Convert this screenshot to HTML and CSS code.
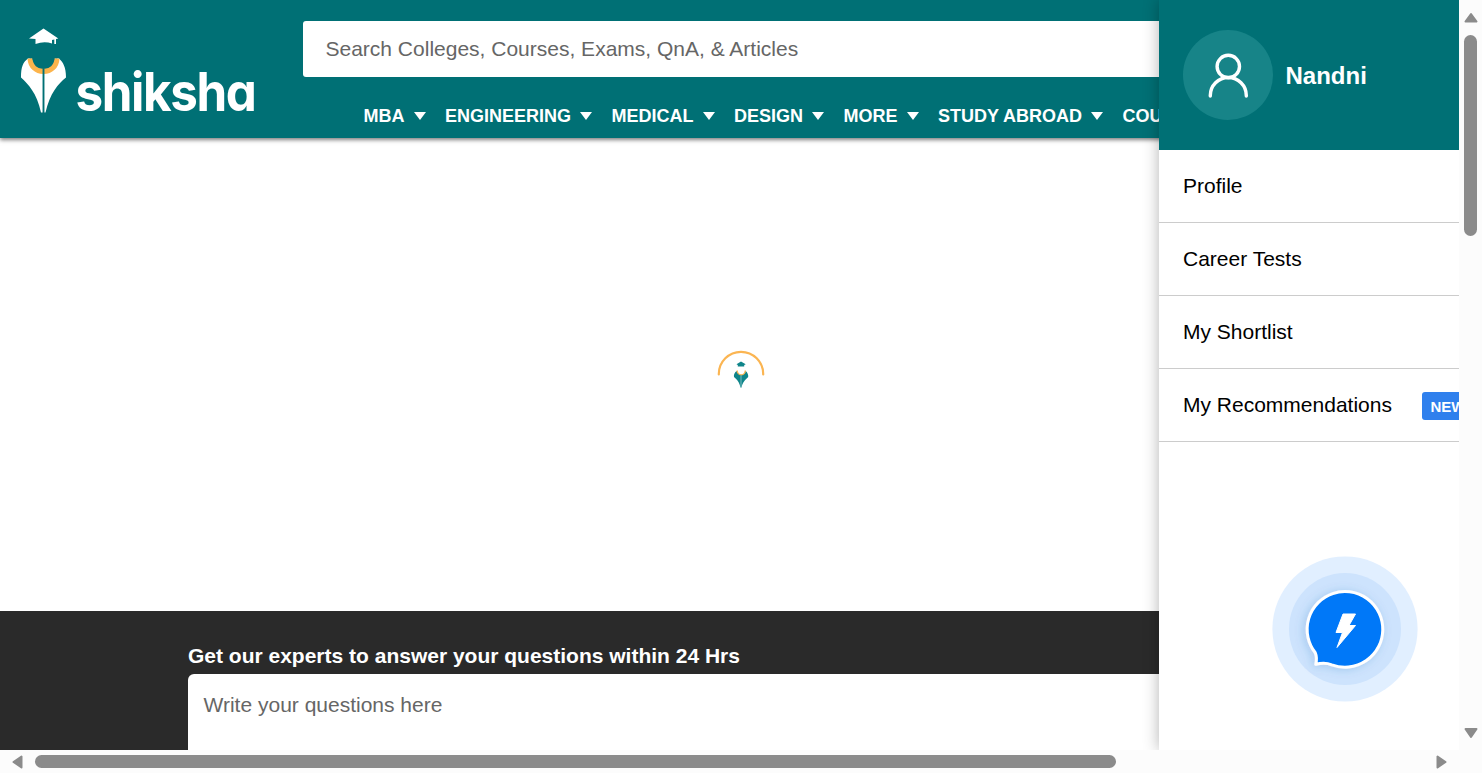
FILE: index.html
```html
<!DOCTYPE html>
<html lang="en">
<head>
<meta charset="utf-8">
<title>Shiksha</title>
<link rel="stylesheet" href="styles.css">
</head>
<body>
<div class="window">
  <div class="viewport">
    <div class="page">
      <header class="header">
        <svg class="logo" viewBox="0 0 280 138">
          <path fill="#fff" d="M29 38.500L43.500 28.500L58.300 38.500L56 39V44H54.300V39.500L52 40V43.500Q44 41 35.500 44V39Z"/>
          <path fill="#fff" d="M28 58.500C23 62 21 67 21 77.500C28 84 37 93 41 112.500H45.500C50 93 58 84 66 77.500C66 67 63 62 59 58.500Z"/>
          <path fill="#007075" stroke="#fcb44c" stroke-width="5" d="M30 58.500C30.500 66.500 36 71.500 43.500 71.500S56.500 66.500 57 58.500"/>
          <path fill="#007075" d="M32.300 57H54.500V59.500H32.300Z"/>
          <path stroke="#007075" stroke-width="1.900" d="M43.500 69V113"/>
          <text class="logo-text" x="75.500" y="110.700" textLength="180" lengthAdjust="spacingAndGlyphs">shiksha</text>
        </svg>
        <div class="header-main">
          <div class="search">Search Colleges, Courses, Exams, QnA, &amp; Articles</div>
          <nav class="nav">
            <a class="nav-item">MBA</a>
            <a class="nav-item">ENGINEERING</a>
            <a class="nav-item">MEDICAL</a>
            <a class="nav-item">DESIGN</a>
            <a class="nav-item">MORE</a>
            <a class="nav-item">STUDY ABROAD</a>
            <a class="nav-item">COUNSELING</a>
          </nav>
        </div>
      </header>
      <main class="main">
        <svg class="loader" width="60" height="60" viewBox="0 0 60 60">
          <path fill="none" stroke="#fbb552" stroke-width="2.200" stroke-linecap="round" d="M7.800 33.500V33A22.200 22.200 0 0 1 52.200 33V33.500"/>
          <path fill="#0f858a" d="M25.500 23.300L30 20.500L34.700 23.300L33.200 24V25.500H26.800V24Z"/>
          <path fill="#0f858a" d="M26 30C23.500 31 22.500 34 23 36C26 38.500 28.500 41 29.400 46.500H30.600C31.500 41 34.500 38.500 37.200 36C37.500 34 36.500 31 34.500 30Z"/>
          <path fill="#fff" stroke="#fbb552" stroke-width="1.400" d="M26.200 29.500A4 4.300 0 0 0 34.300 29.500"/>
          <path stroke="#bfe0e1" stroke-width=".6" d="M30 34.500V46"/>
        </svg>
      </main>
      <section class="ask">
        <h2 class="ask-title">Get our experts to answer your questions within 24 Hrs</h2>
        <div class="ask-box">Write your questions here</div>
      </section>
    </div>
    <aside class="drawer">
      <div class="user">
        <span class="avatar">
          <svg width="46" height="50" viewBox="0 0 46 50" fill="none" stroke="#fff" stroke-width="3.400" stroke-linecap="round"><circle cx="23.300" cy="16.500" r="11.200"/><path d="M5.300 46V45.500A18 18 0 0 1 41.300 45.500V46"/></svg>
        </span>
        <span class="user-name">Nandni</span>
      </div>
      <a class="menu-item">Profile</a>
      <a class="menu-item">Career Tests</a>
      <a class="menu-item">My Shortlist</a>
      <a class="menu-item">My Recommendations<span class="badge">NEW</span></a>
      <svg class="chat" viewBox="0 0 150 150">
        <defs><filter id="glow" x="-30%" y="-30%" width="160%" height="160%"><feDropShadow dx="-2" dy="1" stdDeviation="5" flood-color="#2868b8" flood-opacity=".22"/></filter></defs>
        <circle cx="75" cy="75" r="72.600" fill="#e1efff"/>
        <circle cx="75" cy="75" r="56" fill="#cde3fd"/>
        <path filter="url(#glow)" fill="#0078f8" stroke="#fff" stroke-width="3" stroke-linejoin="round" d="M45 109.500C46 105 46 101.500 44.500 98A37.800 37.800 0 1 1 61 110C56 108 51 108 45 109.500Z" transform="translate(.8 .8)"/>
        <path fill="#fff" stroke="#fff" stroke-linejoin="round" d="M73 60H85.500L79 71.500H85.500L67 93.500L72.500 78.500H66Z"/>
      </svg>
    </aside>
  </div>
  <div class="scroll-y">
    <svg width="14" height="11" viewBox="0 0 14 11"><path class="arrow" d="M7 2L12.500 9.500H1.500Z"/></svg>
    <span class="thumb-y"></span>
    <svg width="14" height="11" viewBox="0 0 14 11"><path class="arrow" d="M7 9L1.500 1H12.500Z"/></svg>
  </div>
  <div class="scroll-x">
    <svg width="11" height="14" viewBox="0 0 11 14"><path class="arrow" d="M1.500 7L9.500 1.500V12.500Z"/></svg>
    <span class="thumb-x"></span>
    <svg width="11" height="14" viewBox="0 0 11 14"><path class="arrow" d="M9.500 7L1.500 1.500V12.500Z"/></svg>
  </div>
</div>
</body>
</html>
```
FILE: styles.css
```css
* { box-sizing: border-box; }
body { margin: 0; font-family: "Liberation Sans", Arial, sans-serif; font-size: 21px; overflow: hidden; }
.window { width: 1482px; height: 773px; display: grid; grid-template: 750px 23px / 1459px 23px; background: #fcfcfc; }
.viewport { position: relative; overflow: hidden; background: #fff; }
.page { height: 750px; display: flex; flex-direction: column; }
.header { height: 138px; flex: none; display: flex; background: #007075; box-shadow: 0 2px 4px rgba(0,0,0,.5); }
.logo { width: 280px; height: 138px; flex: none; overflow: visible; }
.logo-text { font: 700 53.500px Inter, sans-serif; font-feature-settings: "cv11"; letter-spacing: -1.500px; fill: #fff; }
.header-main { flex: 1; padding: 21px 0 0 23px; }
.search { height: 56px; padding-left: 22.500px; line-height: 56px; border-radius: 3px; background: #fff; color: #666; }
.nav { display: flex; gap: 19.500px; margin: 28px 0 0 60.500px; font-size: 18px; font-weight: 700; line-height: 22px; color: #fff; white-space: nowrap; }
.nav-item { display: flex; align-items: center; gap: 9px; }
.nav-item::after { content: ""; border: 6.500px solid transparent; border-top: 8px solid #fff; border-bottom: 0; }
.main { flex: 1; display: flex; justify-content: center; padding-top: 203px; }
.loader { margin-left: 23px; }
.ask { height: 139px; flex: none; padding: 31px 0 0 188px; background: #2a2a2a; }
.ask-title { margin: 0; font-size: 21px; line-height: 27px; color: #fff; padding-bottom: 5px; }
.ask-box { height: 90px; padding: 17px 15.500px; line-height: 28px; border-radius: 6px; background: #fff; color: #666; }
.drawer { position: absolute; top: 0; right: 0; width: 300px; height: 750px; overflow: visible; background: #fff; box-shadow: 0 0 15px rgba(0,0,0,.3); }
.user { height: 150px; padding: 0 24px; display: flex; align-items: center; gap: 12.500px; background: #007075; }
.avatar { width: 90px; height: 90px; flex: none; display: flex; align-items: center; justify-content: center; border-radius: 50%; background: #178488; }
.user-name { padding-top: 2px; color: #fff; font-size: 24px; font-weight: 700; }
.menu-item { height: 73px; padding-left: 24px; display: flex; align-items: center; border-bottom: 1px solid #ccc; color: #000; white-space: nowrap; }
.badge { height: 28px; margin: 2px 0 0 30px; padding: 0 8.500px; line-height: 29px; border-radius: 3px; background: #2f80ed; color: #fff; font-size: 15px; font-weight: 700; }
.chat { display: block; width: 150px; height: 150px; margin: 112px 0 0 111px; }
.scroll-y { display: flex; flex-direction: column; align-items: center; padding: 12px 0 11px; }
.thumb-y { width: 13px; height: 201px; margin: 12px 0 auto; border-radius: 7px; background: #8b8b8b; }
.scroll-x { display: flex; align-items: center; padding: 0 12px 0 12px; }
.thumb-x { width: 1081px; height: 13px; margin: 0 auto 0 12px; border-radius: 7px; background: #8b8b8b; }
.arrow { fill: #8b8b8b; stroke: #8b8b8b; stroke-width: 2; stroke-linejoin: round; }
```
